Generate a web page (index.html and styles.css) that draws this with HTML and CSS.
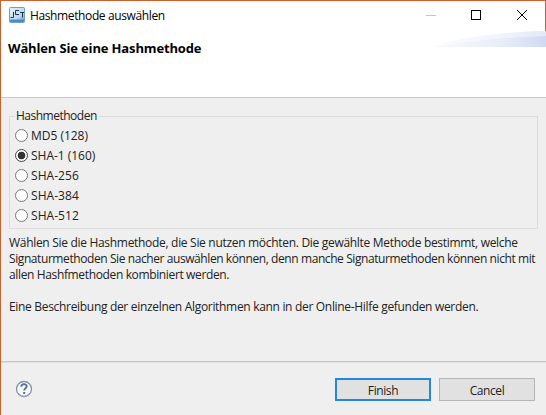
FILE: index.html
```html
<!DOCTYPE html>
<html lang="de">
<head>
<meta charset="utf-8">
<title>Hashmethode auswählen</title>
<link rel="stylesheet" href="styles.css">
</head>
<body>
<div class="dialog">
  <header class="head">
    <div class="titlebar">
      <svg class="app-icon" width="16" height="16" viewBox="0 0 16 16">
        <defs><linearGradient id="sky" x1="0" y1="0" x2="1" y2="1"><stop offset="0" stop-color="#e4f2fc"/><stop offset=".6" stop-color="#bcdaf0"/><stop offset="1" stop-color="#5b9bd0"/></linearGradient></defs>
        <rect x=".5" y=".5" width="15" height="15" rx="1" fill="url(#sky)" stroke="#6ba0cc"/>
        <path d="M1 12.500h14v2.500H1z" fill="#4b8dc7"/>
        <path d="M4.500 5v5.500H1.500M10 3.500H6.500v4H10M11 5.500h4M13.500 5.500v5" fill="none" stroke="#25364a"/>
      </svg>
      <span class="title">Hashmethode auswählen</span>
      <svg class="controls" width="102" height="12" viewBox="0 0 102 12">
        <path d="M0 5.500h10" stroke="#c4c4c4"/>
        <rect x="45.500" y=".5" width="9" height="9" fill="none" stroke="#000"/>
        <path d="M91 0l10 10M101 0l-10 10" stroke="#000" fill="none"/>
      </svg>
    </div>
    <h1>Wählen Sie eine Hashmethode</h1>
    <svg class="swoosh" width="112" height="16" viewBox="0 0 112 16">
      <defs><linearGradient id="wave"><stop offset="0" stop-color="#f8faff"/><stop offset=".6" stop-color="#e8edf9"/><stop offset="1" stop-color="#d0daf3"/></linearGradient></defs>
      <path d="M0 16C25 6 68 1 112 0v16z" fill="url(#wave)"/>
      <path d="M0 16C25 6 68 1 112 0v5Q65 6 0 16z" fill="#fff" opacity=".4"/>
    </svg>
  </header>
  <main>
    <fieldset>
      <legend>Hashmethoden</legend>
      <label><input type="radio" name="hash"><span class="bits">MD5 (128)</span></label>
      <label><input type="radio" name="hash" checked><span class="bits">SHA-1 (160)</span></label>
      <label><input type="radio" name="hash"><span>SHA-256</span></label>
      <label><input type="radio" name="hash"><span>SHA-384</span></label>
      <label><input type="radio" name="hash"><span>SHA-512</span></label>
    </fieldset>
    <p><span class="l1">Wählen Sie die Hashmethode, die Sie nutzen möchten. Die gewählte Methode bestimmt, welche</span><br><span class="l2">Signaturmethoden Sie nacher auswählen können, denn manche Signaturmethoden können nicht mit</span><br><span class="l3">allen Hashfmethoden kombiniert werden.</span></p>
    <p><span class="l4">Eine Beschreibung der einzelnen Algorithmen kann in der Online-Hilfe gefunden werden.</span></p>
  </main>
  <footer>
    <svg class="help" width="18" height="18" viewBox="0 0 18 18">
      <circle cx="9" cy="9" r="7.500" fill="#f6f8fa" stroke="#8292ab" stroke-width="1.300"/>
      <path d="M6.300 6.800C6.300 3.300 11.700 3.300 11.700 6.400C11.700 8.300 9.200 8.300 9.200 10.600" fill="none" stroke="#5b7190" stroke-width="1.900"/>
      <path d="M8.200 12h2v2h-2z" fill="#5b7190"/>
    </svg>
    <button class="finish">Finish</button>
    <button class="cancel">Cancel</button>
  </footer>
</div>
</body>
</html>
```
FILE: styles.css
```css
* { box-sizing: border-box; }
body { margin: 0; font: 12px/16px "Open Sans", "Noto Sans", sans-serif; color: #222; background: #efefef; overflow: hidden; }
.dialog { width: 546px; height: 415px; display: flex; flex-direction: column; border-left: 1px solid #cf602b; border-top: 1px solid #cf602b; }
.head { position: relative; height: 97px; flex: none; background: #fff; border-bottom: 1px solid #c8c8c8; }
.titlebar { height: 30px; display: flex; align-items: flex-start; padding: 6px 17px 0 8px; border-right: 1px solid #cf602b; }
.title { margin-left: 5px; color: #000; line-height: 18px; white-space: nowrap; letter-spacing: -.38px; }
.controls { margin: 3px 0 0 auto; }
h1 { margin: 9px 0 0 7px; font-size: 13px; line-height: 16px; font-weight: 700; color: #000; letter-spacing: -.15px; }
h1, .title { width: max-content; }
.swoosh { position: absolute; right: 0; top: 30px; }
main { flex: none; height: 263px; padding: 10px 8px 0 8px; }
fieldset { margin: 0; padding: 1px 5px 0; height: 121px; border: 1px solid #dcdcdc; min-width: 0; }
legend { padding: 0 2px 0 1px; height: 16px; letter-spacing: -.5px; }
label { display: flex; align-items: center; height: 20px; }
input { appearance: none; width: 13px; height: 13px; margin: 0 4px 0 0; border: 1px solid #777; border-radius: 50%; background: #fff; }
label span { margin-left: -1px; padding-top: 2px; letter-spacing: .05px; }
label .bits { letter-spacing: -.02px; }
input:checked { background: radial-gradient(circle, #333 0 3.500px, #fff 4.200px); border-color: #444; }
p { margin: 6px 0 16px; white-space: nowrap; }
.l1 { letter-spacing: -.305px; }
.l2 { letter-spacing: -.415px; }
.l3 { letter-spacing: -.36px; }
.l4 { letter-spacing: -.315px; }
footer { flex: 1; border-top: 1px solid #c6c6c6; box-shadow: inset 0 1px #e0e0e0; display: flex; align-items: flex-start; padding: 16px 11px 0 14px; gap: 8px; }
.help { margin: 2px auto 0 0; }
button { width: 96px; height: 23px; padding: 2px 0 0; font: inherit; color: #222; background: #e1e1e1; border: 1px solid #b5b5b5; letter-spacing: -.4px; }
.finish { border: 2px solid #2388db; }
```
